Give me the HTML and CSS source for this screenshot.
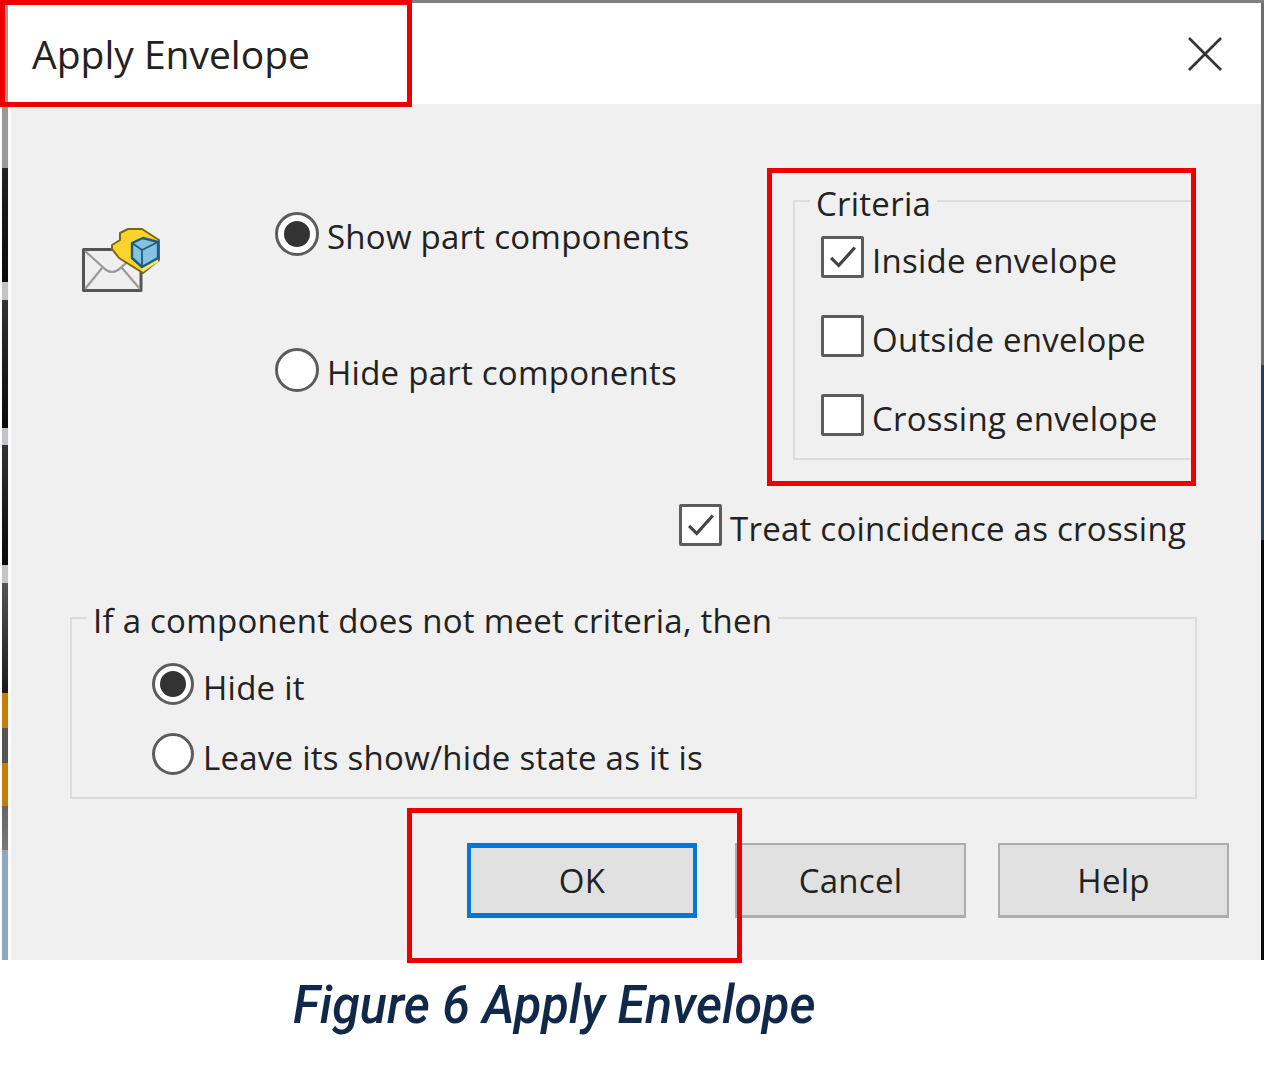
FILE: index.html
```html
<!DOCTYPE html>
<html lang="en">
<head>
  <meta charset="UTF-8">
  <title>Apply Envelope</title>
  <link rel="stylesheet" href="styles.css">
</head>
<body>
  <div class="dialog">
    <div class="titlebar">
      <span class="title">Apply Envelope</span>
      <svg class="close" viewBox="0 0 34 34"><path d="M1 1 L33 33 M33 1 L1 33"/></svg>
    </div>

    <div class="content">
      <div class="top-row">
        <svg class="env-icon" viewBox="0 0 78 65">
          <path d="M1.5 21.5 H59 V62.5 H1.5 Z" fill="#efefef" stroke="#555" stroke-width="3" stroke-linejoin="round"/>
          <path d="M3 23 L24 42 Q30 46 36 42 L58 23 M3 61 L20 40 M58 61 L40 40" fill="none" stroke="#9a9a9a" stroke-width="2.2"/>
          <path d="M30 17 L38 12 L38 5 L46 1 L60 1 L77 12 L77 32 L61 45 L37 30 L30 21 Z" fill="#fbd32d" stroke="#7d6414" stroke-width="2" stroke-linejoin="round"/>
          <path d="M60 39 L76 30 V34 L61 44 Z" fill="#fde46a"/>
          <path d="M50 15 L61 10 L76 14 V30 L60 39 L50 30 Z" fill="#85c3e0" stroke="#1d5c80" stroke-width="2.4" stroke-linejoin="round"/>
          <path d="M50 15 L60 22 L76 14 M60 22 V39" fill="none" stroke="#1d5c80" stroke-width="1.8"/>
        </svg>

        <div class="part-options">
          <label class="option"><span class="radio on"></span>Show part components</label>
          <label class="option"><span class="radio"></span>Hide part components</label>
        </div>

        <fieldset class="group criteria">
          <legend>Criteria</legend>
          <label class="option"><span class="check"><svg viewBox="0 0 38 38"><path d="M7 20 L15 28 L32 9"/></svg></span>Inside envelope</label>
          <label class="option"><span class="check"></span>Outside envelope</label>
          <label class="option"><span class="check"></span>Crossing envelope</label>
        </fieldset>
      </div>

      <label class="option coincidence"><span class="check"><svg viewBox="0 0 38 38"><path d="M7 20 L15 28 L32 9"/></svg></span>Treat coincidence as crossing</label>

      <fieldset class="group fallback">
        <legend>If a component does not meet criteria, then</legend>
        <label class="option"><span class="radio on"></span>Hide it</label>
        <label class="option"><span class="radio"></span>Leave its show/hide state as it is</label>
      </fieldset>

      <div class="buttons">
        <button class="btn default">OK</button>
        <button class="btn">Cancel</button>
        <button class="btn">Help</button>
      </div>
    </div>

    <!-- red markup drawn over the screenshot -->
    <div class="mark mark-title"></div>
    <div class="mark mark-criteria"></div>
    <div class="mark mark-ok"></div>
  </div>

  <p class="caption">Figure 6 Apply Envelope</p>
</body>
</html>
```

FILE: styles.css
```css
html, body {
  margin: 0;
  background: #fff;
}
body {
  font-family: "Open Sans", "Noto Sans", sans-serif;
  color: #1a1a1a;
  overflow: hidden;
  height: 1079px;
}
/* the frame edges show a bit of whatever was behind the window */
.dialog {
  position: relative;
  height: 960px;
  margin-left: 2px;
  box-sizing: border-box;
  padding: 3px 3px 0 6px;
  background-color: #f0f0f0;
  background-repeat: no-repeat;
  background-size: 100% 3px, 6px 100%, 3px 100%;
  background-position: 0 0, 0 0, 100% 0;
  background-image:
    linear-gradient(#808080, #808080),
    linear-gradient(#999 0, #999 168px, #222 168px, #0a0a0a 282px, #c4c4c8 282px, #c4c4c8 300px, #333 300px, #0a0a0a 428px, #c4c4c8 428px, #c4c4c8 445px, #333 445px, #0a0a0a 565px, #c4c4c8 565px, #c4c4c8 583px, #555 583px, #1a1a1a 693px, #c77e10 693px, #c77e10 728px, #555 728px, #555 763px, #c77e10 763px, #c77e10 806px, #666 806px, #777 850px, #8fa8c0 850px, #8fa8c0 960px),
    linear-gradient(#6e6e6e 0, #6e6e6e 365px, #24424e 365px, #24424e 540px, #0c0c0c 540px, #0c0c0c 960px);
}
.titlebar {
  height: 101px;
  background: #fff;
  display: flex;
  align-items: center;
  justify-content: space-between;
  padding: 0 39px 0 24px;
}
.title {
  font-size: 39px;
  color: #222;
}
.close {
  width: 34px;
  height: 34px;
}
.close path {
  stroke: #333;
  stroke-width: 2.6;
  fill: none;
}
.content {
  height: 856px;
  box-sizing: border-box;
  padding: 97px 0 0 62px;
  box-shadow: inset 3px 0 #fafafa;
}
.top-row {
  display: flex;
  align-items: flex-start;
  height: 258px;
}
.env-icon {
  width: 78px;
  height: 65px;
  margin: 27px 0 0 12px;
  flex: none;
}
.part-options {
  margin: 14px 0 0 115px;
  width: 518px;
  flex: none;
  display: flex;
  flex-direction: column;
  gap: 92px;
}
.option {
  display: flex;
  align-items: center;
  font-size: 33px;
  letter-spacing: 0.25px;
  line-height: 44px;
  white-space: nowrap;
  color: #222;
}
.radio {
  width: 44px;
  height: 44px;
  box-sizing: border-box;
  border: 3px solid #5c5c5c;
  border-radius: 50%;
  background: #fff;
  margin: -6px 8px 0 0;
  flex: none;
  display: flex;
  align-items: center;
  justify-content: center;
}
.radio.on::after {
  content: "";
  width: 26px;
  height: 26px;
  border-radius: 50%;
  background: #333;
}
.check {
  width: 43px;
  height: 42px;
  box-sizing: border-box;
  border: 3px solid #5c5c5c;
  border-radius: 2px;
  background: #fff;
  margin: -8px 8px 0 0;
  flex: none;
}
.check svg {
  display: block;
  width: 100%;
  height: 100%;
}
.check path {
  fill: none;
  stroke: #444;
  stroke-width: 3.4;
}
.group {
  margin: 0;
  padding: 0;
  box-sizing: border-box;
  border: 2px solid #dcdcdc;
  min-width: 0;
}
.group legend {
  font-size: 33px;
  letter-spacing: 0.25px;
  line-height: 36px;
  padding: 6px 6px 0;
  margin-left: 15px;
  color: #222;
}
.criteria {
  flex: none;
  width: 402px;
  height: 280px;
  margin-top: -21px;
}
.criteria .option {
  margin-left: 26px;
}
.criteria .option:first-of-type {
  margin-top: 17px;
}
.criteria .option + .option {
  margin-top: 35px;
}
.coincidence {
  margin: 48px 0 0 609px;
}
.fallback {
  width: 1127px;
  height: 202px;
  margin-top: 46px;
}
.fallback .option {
  margin-left: 80px;
}
.fallback .option:first-of-type {
  margin-top: 27px;
}
.fallback .option + .option {
  margin-top: 26px;
}
.fallback .radio {
  width: 42px;
  height: 42px;
  margin: -8px 9px 0 0;
}
.buttons {
  display: flex;
  margin: 44px 0 0 397px;
}
.btn {
  width: 231px;
  height: 75px;
  margin-right: 32px;
  box-sizing: border-box;
  background: #e1e1e1;
  border: 2px solid #adadad;
  border-bottom-width: 3px;
  font: 33px "Open Sans", sans-serif;
  letter-spacing: 0.25px;
  color: #222;
  padding: 0;
}
.btn.default {
  width: 230px;
  border: solid #0078d7;
  border-width: 5px 4px;
  margin-right: 38px;
}
.mark {
  position: absolute;
  border: 5px solid #ee0000;
  box-sizing: border-box;
}
.mark-title {
  left: -2px;
  top: 0;
  width: 412px;
  height: 107px;
}
.mark-criteria {
  left: 765px;
  top: 168px;
  width: 429px;
  height: 318px;
}
.mark-ok {
  left: 405px;
  top: 808px;
  width: 335px;
  height: 155px;
}
.caption {
  margin: 12px 0 0 293px;
  font-family: Roboto, sans-serif;
  font-style: italic;
  font-weight: 500;
  font-size: 54px;
  line-height: 66px;
  color: #10294a;
  white-space: nowrap;
  transform: scaleX(0.93);
  transform-origin: left center;
}
```
